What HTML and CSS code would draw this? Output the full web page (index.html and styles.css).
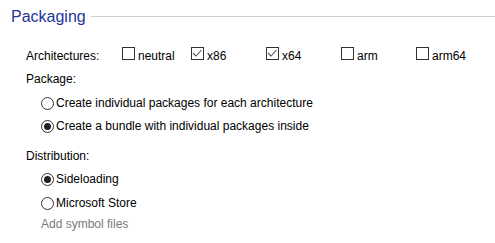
FILE: index.html
```html
<!DOCTYPE html>
<html lang="en">
  <head>
    <meta charset="utf-8" />
    <title>Packaging</title>
    <link rel="stylesheet" href="styles.css">
  </head>
  <body>
    <div class="page">
      <!-- Group header -->
      <div class="group-title">
        <span class="group-title__text">Packaging</span>
        <span class="group-title__rule"></span>
      </div>

      <!-- Architectures -->
      <div class="arch-row">
        <span>Architectures:</span>
        <label class="check"><span class="check__box"></span>neutral</label>
        <label class="check"><span class="check__box">
          <svg width="11" height="11" viewBox="0 0 11 11"><path d="M1 5 L4 8 L9.5 2" fill="none" stroke="#555" stroke-width="1.1"/></svg>
        </span>x86</label>
        <label class="check"><span class="check__box">
          <svg width="11" height="11" viewBox="0 0 11 11"><path d="M1 5 L4 8 L9.5 2" fill="none" stroke="#555" stroke-width="1.1"/></svg>
        </span>x64</label>
        <label class="check"><span class="check__box"></span>arm</label>
        <label class="check"><span class="check__box"></span>arm64</label>
      </div>

      <!-- Package -->
      <div class="field-label field-label--package">Package:</div>
      <div class="options">
        <label class="radio"><span class="radio__dot"></span>Create individual packages for each architecture</label>
        <label class="radio"><span class="radio__dot selected"></span>Create a bundle with individual packages inside</label>
      </div>

      <!-- Distribution -->
      <div class="field-label field-label--dist">Distribution:</div>
      <div class="options options--dist">
        <label class="radio"><span class="radio__dot selected"></span>Sideloading</label>
        <label class="radio"><span class="radio__dot"></span>Microsoft Store</label>
        <div class="link-disabled">Add symbol files</div>
      </div>
    </div>
  </body>
</html>
```

FILE: styles.css
```css
html,
body {
  margin: 0;
  padding: 0;
  background: #fff;
}
.page {
  width: 495px;
  height: 243px;
  font-family: "Liberation Sans Narrow", "Liberation Sans", sans-serif;
  font-size: 12px;
  line-height: 16px;
  color: #000;
  overflow: hidden;
}

/* header */
.group-title {
  display: flex;
  align-items: center;
  height: 22px;
  margin-top: 6px;
  padding-left: 11px;
}
.group-title__text {
  font-size: 16px;
  line-height: 22px;
  color: #24359a;
}
.group-title__rule {
  flex: 1;
  height: 1px;
  margin-left: 5px;
  margin-bottom: 1px;
  background: #cfcfcf;
}

/* architectures */
.arch-row {
  display: grid;
  grid-template-columns: 96px 69px 75px 75px 75px auto;
  align-items: center;
  height: 16px;
  margin-top: 19px;
  padding-left: 26px;
}
.check {
  display: flex;
  align-items: center;
}
.check__box {
  box-sizing: border-box;
  width: 13px;
  height: 13px;
  margin-right: 3px;
  margin-bottom: 5px;
  border: 1px solid #333;
  background: #fff;
  display: flex;
  align-items: center;
  justify-content: center;
}

/* labels */
.field-label {
  padding-left: 26px;
}
.field-label--package {
  margin-top: 8px;
}
.field-label--dist {
  margin-top: 14px;
}

/* radios */
.options {
  display: flex;
  flex-direction: column;
  gap: 7px;
  margin-top: 8px;
  padding-left: 41px;
}
.options--dist {
  gap: 8px;
  margin-top: 7px;
}
.radio {
  display: flex;
  align-items: center;
  height: 16px;
}
.radio__dot {
  box-sizing: border-box;
  width: 13px;
  height: 13px;
  margin-right: 2px;
  border: 1px solid #333;
  border-radius: 50%;
  display: flex;
  align-items: center;
  justify-content: center;
}
.radio__dot.selected::after {
  content: "";
  width: 7px;
  height: 7px;
  border-radius: 50%;
  background: #222;
}
.link-disabled {
  margin-top: -3px;
  color: #7a7a7a;
}
```
